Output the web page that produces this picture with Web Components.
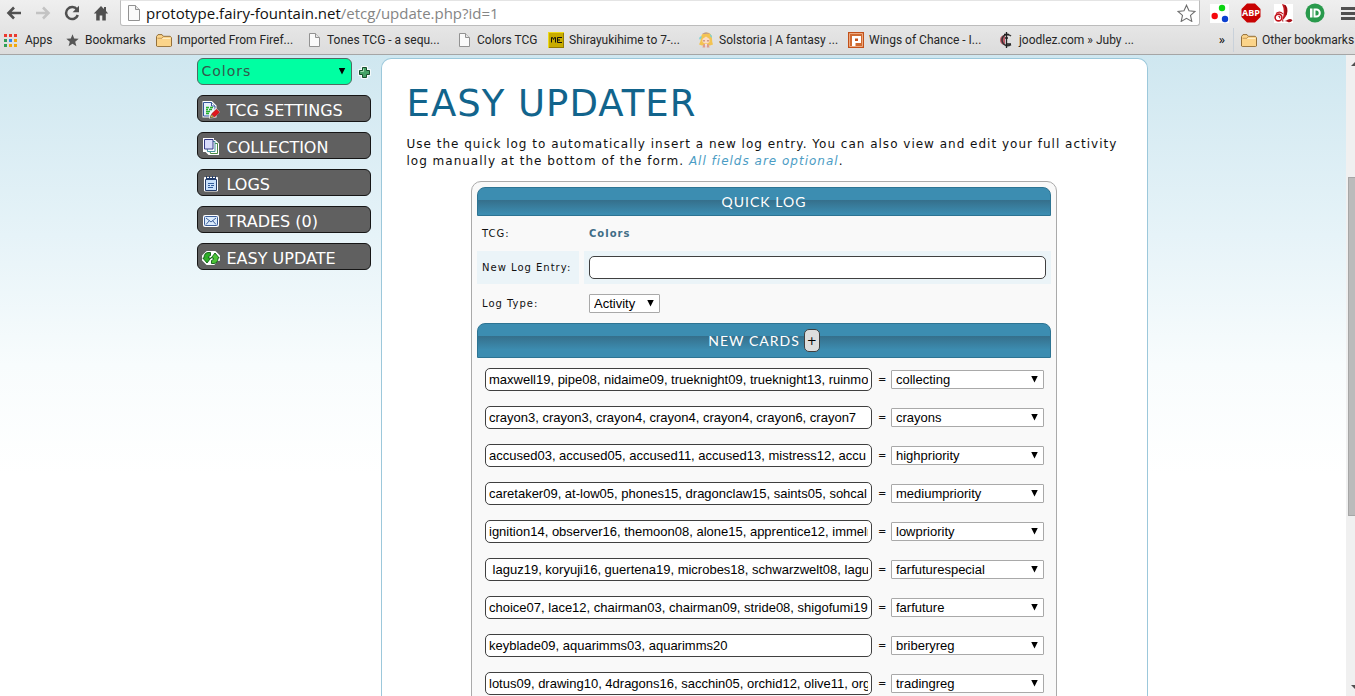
<!DOCTYPE html>
<html lang="en">
<head>
<meta charset="utf-8">
<title>Easy Updater</title>
<style>
  html, body { margin: 0; height: 100%; }
  body { overflow: hidden; font-family: "DejaVu Sans", Verdana, sans-serif; }
</style>
</head>
<body>
<app-window></app-window>

<script>
const define = (name, html, setup) => {
  const template = document.createElement('template');
  template.innerHTML = '<style>*{box-sizing:border-box}</style>' + html;
  customElements.define(name, class extends HTMLElement {
    constructor() {
      super();
      this.attachShadow({ mode: 'open' }).append(template.content.cloneNode(true));
    }
    connectedCallback() { if (setup) setup(this, this.shadowRoot); }
  });
};

const icons = {
  back: [16, 16, '<path d="M8 2.5 2.5 8 8 13.5M3 8h12" fill="none" stroke="#505050" stroke-width="2.6"/>'],
  forward: [16, 16, '<path d="M8 2.5 13.5 8 8 13.5M13 8H1" fill="none" stroke="#c3c3c3" stroke-width="2.6"/>'],
  reload: [16, 16, '<path d="M13 4.6A6 6 0 1 0 13.8 10" fill="none" stroke="#505050" stroke-width="2.5"/><path d="M15 .8v6.4H8.600z" fill="#505050"/>'],
  home: [16, 16, '<path d="M8 1 .8 8.500h2.400V15.500h3.500v-5h2.600v5h3.500v-7h2.400L13 6V2h-2v2.100z" fill="#505050"/>'],
  page: [12, 16, '<path d="M.5.5h7l4 4v11H.5z" fill="#fafafa" stroke="#929292"/><path d="M7.500.5v4h4" fill="#e4e4e4" stroke="#929292"/>'],
  smallPage: [11, 14, '<path d="M.5.5h6l4 4v9H.5z" fill="#fafafa" stroke="#929292"/><path d="M6.500.5v4h4" fill="#e4e4e4" stroke="#929292"/>'],
  star: [19, 18, '<path d="m9.500 1.200 2.500 5.600 6 .6-4.500 4 1.300 6-5.300-3.100-5.300 3.100 1.300-6-4.500-4 6-.6z" fill="#fff" stroke="#6e6e6e" stroke-width="1.100"/>'],
  rgb: [19, 19, '<path d="M0 0h19v19H0z" fill="#fff"/><circle cx="12" cy="4" r="3.200" fill="#0bd411"/><circle cx="4.700" cy="12" r="3.200" fill="#f5080d"/><circle cx="15" cy="15" r="3.200" fill="#0b3fd0"/>'],
  abpShape: [20, 20, '<path d="M6 .5h8L19.500 6v8L14 19.500H6L.5 14V6z" fill="#c80202"/>'],
  red: [19, 19, '<path d="M0 0h19v19H0z" fill="#fff"/><path d="M8 0q6 1 5.500 7T8 16.500Q11.500 7 8 0z" fill="#c4151d"/><path d="M8 16q3 2 6-.5 2.500-1.500 4.500.8-2 3-5 1.500-2.500-1.400-5.500-.3z" fill="#a90e16"/><path d="M11 1q2 4 1 10" stroke="#7b0b10" fill="none"/><circle cx="4.500" cy="13.500" r="3.400" fill="none" stroke="#c4151d" stroke-width="1.600"/><path d="M4.300 12.300q2 0 1.300 2M2 9.500q4-3 7 .5" fill="none" stroke="#c4151d" stroke-width="1.100"/>'],
  green: [20, 20, '<circle cx="10" cy="10" r="9.500" fill="#299a4c"/><path d="M5 5.500h2.500v9H5zM8.500 5.500h2.800a4.500 4.500 0 0 1 0 9H8.500z" fill="#fff"/><path d="M10.500 7.500h.7a2.500 2.500 0 0 1 0 5h-.7z" fill="#299a4c"/>'],
  menu: [14, 13, '<path d="M0 1.500h14M0 6.500h14M0 11.500h14" stroke="#505050" stroke-width="3"/>'],
  apps: [13, 13, '<path d="M0 0h3v3H0zM5 0h3v3H5zM10 0h3v3h-3z" fill="#ea3a30"/><path d="M0 5h3v3H0z" fill="#2f9e56"/><path d="M5 5h3v3H5z" fill="#2f86ee"/><path d="M10 5h3v3h-3z" fill="#f1a80d"/><path d="M0 10h3v3H0z" fill="#2f9e56"/><path d="M5 10h3v3H5zM10 10h3v3h-3z" fill="#f1a80d"/>'],
  solidStar: [13, 13, '<path d="m6.500.3 1.700 4.200 4.500.3-3.500 2.900 1.200 4.600-3.900-2.600-3.900 2.600 1.200-4.600L.3 4.800l4.500-.3z" fill="#555"/>'],
  folder: [16, 13, '<path d="M.5 12V2.500L2 .6h4l1.300 1.700h6.900l1.300 1.300V12l-.8.600H1.200z" fill="#fbd48a" stroke="#94703a"/><path d="M1.500 4.500h13" stroke="#ffedc2"/><path d="M7 2.800l-1 1.500H1.500" fill="none" stroke="#c9974f"/>'],
  mc: [16, 16, '<path d="M0 0h16v16H0z" fill="#c8ac00"/><path d="M0 0h16v1H1v15H0z" fill="#eeda1a"/><path d="M15 1v14H1v1h15V1z" fill="#937b00"/><path d="M3.500 10.500v-5h1l1 2 1-2h1v5M14 5.500H9.500v5H14M9.500 8H12" fill="none" stroke="#111"/>'],
  girl: [14, 16, '<path d="M2 5q1-5 6-4.500 5 .5 5 6 0 4 1 6l-3 1H3l-3-1q2-3 2-7.500z" fill="#f3c352"/><path d="M3 2Q7-1 11 2L8 1.500z" fill="#a98aa0"/><path d="M2 4 0 6l1 2 2-3zM11 2l2 2v2l-2-2z" fill="#7ed2d6"/><path d="M3.500 7 7 4.500l3.500 2.500v3Q7 13 3.500 10z" fill="#fbdcc6"/><path d="M5 8v1.500M9 8v1.500" stroke="#a1584b"/><path d="M4.500 12h5l1 3.500h-7z" fill="#de9d8b"/><path d="M6 12h2l-.5 4h-1z" fill="#eee9f1"/>'],
  wings: [16, 16, '<path d="M0 0h16v16H0z" fill="#c25019"/><path d="M1.500 1.500h13v13h-13z" fill="#cf6b32" stroke="#eeaa80"/><path d="M4 4h9v7H7.500v3H4z" fill="#fff"/><path d="M7 6.500h3V9H7z" fill="#c25019"/>'],
  joodlez: [14, 16, '<path d="M6 3Q1 3.500 1 8t5 5z" fill="#bd5966"/><path d="M12 4Q8 1 4.500 4q-3 4 0 8 3.500 3 7.500.5" fill="none" stroke="#343434" stroke-width="1.500"/><path d="M7.500 0v16M5 2.500h5M6 6h3M8 12h4" stroke="#222" stroke-width="1.300"/>'],
  plus: [13, 13, '<path d="M4.500 1.500h4v3h3v4h-3v3h-4v-3h-3v-4h3z" fill="none" stroke="#fff" stroke-width="2.500"/><path d="M4.500 1.500h4v3h3v4h-3v3h-4v-3h-3v-4h3z" fill="#45a266" stroke="#174d2b"/><path d="M5.500 2.500v3h-3" fill="none" stroke="#a4dcb4"/>'],
  settings: [18, 18, '<path d="M1.500 1h8l4 4v10.500h-12z" fill="#fff" stroke="#fff" stroke-width="2"/><path d="M1.500 1.500h8l3.500 3.500v10H1.500z" fill="#e7effc" stroke="#35579c"/><path d="M9.500 1.500V5H13" fill="#fff" stroke="#35579c"/><path d="M4 6.500h3M8 6.500h3M4 8.500h2M7 8.500h3M4 10.500h4M4 12.500h3" stroke="#22b02b" stroke-width="1.300"/><path d="m7 17.500.5-4.500L14 7l4 4-6 6z" fill="#fff"/><path d="m9.500 13 5-4.800 3 3-5 4.800z" fill="#e2161c" stroke="#9b0c0e" stroke-width=".7"/><path d="m8.200 16.900 1-3.200 2.500 2.400z" fill="#f6cf3d" stroke="#222" stroke-width=".6"/>'],
  collection: [16, 17, '<path d="M1 1h9v2h2l3 3v10H6l-3-3H1z" fill="#fff" stroke="#fff" stroke-width="2"/><path d="M5.500 5.500h9v10h-7z" fill="#fff" stroke="#4d8c45"/><path d="M3.500 3.500h8.500v10H4.500z" fill="#fff" stroke="#45929c"/><path d="M1.500 1.500H10V11H1.500z" fill="#d9dcfb" stroke="#353a87"/>'],
  logs: [14, 16, '<path d="M.5 1.500h13V15H.5z" fill="#fff" stroke="#fff"/><path d="M1.500 3.500h11v11h-11z" fill="#c9e0fb" stroke="#243d6b"/><path d="M2 3h10" stroke="#243d6b" stroke-width="2"/><path d="M2.500 0v3M5.500 0v3M8.500 0v3M11.500 0v3" stroke="#243d6b"/><path d="M4 7.500h6M4 9.500h2M7 9.500h3M4 11.500h5" stroke="#315c9b"/>'],
  trades: [16, 12, '<rect width="16" height="12" rx="2" fill="#fff"/><rect x="1.500" y="1.500" width="13" height="9" rx="1" fill="#dcecfc" stroke="#3c5f9b"/><path d="m3 3 5 4 5-4M3 9.500l3.500-4M13 9.500l-3.500-4" fill="none" stroke="#3c5f9b"/>'],
  update: [18, 14, '<path d="M5 1h8l4 4v4h-2l-3 4H5L1 9V5z" fill="#fff" stroke="#fff" stroke-width="2" stroke-linejoin="round"/><path d="M8.500 1.500H6Q2 2 2 7H.8L5 12l3.800-5H6.500Q6 5 8.500 4.500z" fill="#2fae27" stroke="#0c5d13" stroke-width=".9"/><path d="M9.500 12.500H12Q16 12 16 7h1.200L13 2 9.200 7h2.300Q12 9 9.500 9.500z" fill="#4cc436" stroke="#0c5d13" stroke-width=".9"/>'],
};

define('ui-icon', `
  <style>:host{display:inline-flex;flex:none} svg{display:block}</style>
  <span></span>`, (host, root) => {
  const [w, h, body] = icons[host.getAttribute('name')];
  root.querySelector('span').innerHTML = `<svg width="${w}" height="${h}" viewBox="0 0 ${w} ${h}" aria-hidden="true">${body}</svg>`;
});

define('bookmark-link', `
  <style>
    :host{display:block;flex:none;width:150px}
    :host([size=short]){width:92px}
    :host([size=apps]){width:60px}
    :host([size=other]){width:122px}
    a{display:flex;align-items:center;gap:5px;height:24px;color:#262626;text-decoration:none;white-space:nowrap;
      font:12px/16px Roboto,"Segoe UI",sans-serif}
    span{display:flex;justify-content:center;min-width:16px}
    :host([size=apps]) span{min-width:13px}
    :host([size=apps]) a{gap:8px}
  </style>
  <a href="#"><span></span><slot></slot></a>`, (host, root) => {
  const icon = document.createElement('ui-icon');
  icon.setAttribute('name', host.getAttribute('icon'));
  root.querySelector('span').replaceChildren(icon);
});

define('browser-bar', `
  <style>
    :host{display:block;flex:none;overflow:hidden;border-bottom:1px solid #a5a5a5;background:linear-gradient(#efefef,#dcdcdc)}
    .tools{display:flex;align-items:center;height:26px}
    button{display:flex;justify-content:center;padding:0;border:0;background:none}
    .nav{display:flex;gap:13px;padding:0 11px 0 6px}
    .address{display:flex;flex:1;align-items:center;min-width:0;height:26px;padding:0 3px 0 7px;gap:6px;
      border:1px solid #bcbcbc;border-top-color:#e4e4e4;border-radius:0 0 3px 3px;background:#fff}
    .url{flex:1;font:15px/20px "Open Sans","Segoe UI",sans-serif;color:#111;white-space:nowrap}
    .url span{color:#858585}
    .ext{display:flex;align-items:center;gap:12px;padding-left:9px}
    .ext button{width:20px}
    .ext .abp{display:grid;place-items:center;color:#fff;font:bold 9px/10px "Open Sans",sans-serif}
    .abp > *{grid-area:1/1}
    .ext .menu{width:14px;margin-left:4px}
    .marks{display:flex;align-items:center;height:28px;padding-left:4px}
    .more{flex:1;display:flex;justify-content:flex-end;padding-right:8px;font:12px/16px "Open Sans",sans-serif}
    .other{border-left:1px solid #c9d1da;padding-left:7px}
  </style>
  <div class="tools">
    <div class="nav">
      <button aria-label="Back"><ui-icon name="back"></ui-icon></button>
      <button aria-label="Forward"><ui-icon name="forward"></ui-icon></button>
      <button aria-label="Reload"><ui-icon name="reload"></ui-icon></button>
      <button aria-label="Home"><ui-icon name="home"></ui-icon></button>
    </div>
    <div class="address">
      <ui-icon name="page"></ui-icon>
      <div class="url">prototype.fairy-fountain.net<span>/etcg/update.php?id=1</span></div>
      <button aria-label="Bookmark this page"><ui-icon name="star"></ui-icon></button>
    </div>
    <div class="ext">
      <button aria-label="Colour extension"><ui-icon name="rgb"></ui-icon></button>
      <button class="abp"><ui-icon name="abpShape"></ui-icon><span>ABP</span></button>
      <button aria-label="Reader extension"><ui-icon name="red"></ui-icon></button>
      <button aria-label="Green extension"><ui-icon name="green"></ui-icon></button>
      <button class="menu" aria-label="Menu"><ui-icon name="menu"></ui-icon></button>
    </div>
  </div>
  <div class="marks">
    <bookmark-link icon="apps" size="apps">Apps</bookmark-link>
    <bookmark-link icon="solidStar" size="short">Bookmarks</bookmark-link>
    <bookmark-link icon="folder">Imported From Firef...</bookmark-link>
    <bookmark-link icon="smallPage">Tones TCG - a sequ...</bookmark-link>
    <bookmark-link icon="smallPage" size="short">Colors TCG</bookmark-link>
    <bookmark-link icon="mc">Shirayukihime to 7-...</bookmark-link>
    <bookmark-link icon="girl">Solstoria | A fantasy ...</bookmark-link>
    <bookmark-link icon="wings">Wings of Chance - I...</bookmark-link>
    <bookmark-link icon="joodlez">joodlez.com » Juby ...</bookmark-link>
    <span class="more">»</span>
    <bookmark-link class="other" icon="folder" size="other">Other bookmarks</bookmark-link>
  </div>`);

define('scroll-bar', `
  <style>
    :host{display:flex;flex:none;width:9px;overflow:hidden;background:#f0f0f0}
    .track{display:flex;flex:none;flex-direction:column;align-items:center;width:17px;padding:7px 0}
    .up,.down{flex:none;border:4px solid transparent;border-top-width:0;border-bottom:4px solid #505050}
    .down{border-width:4px 4px 0;border-top-color:#505050}
    .before{flex:111}
    .thumb{flex:338;width:13px;border:1px solid #a6a6a6;background:#bbb}
    .after{flex:170}
  </style>
  <div class="track"><i class="up"></i><i class="before"></i><i class="thumb"></i><i class="after"></i><i class="down"></i></div>`);

define('pick-list', `
  <style>
    :host{display:block;position:relative}
    :host::after{content:"";position:absolute;right:6px;top:50%;width:7px;height:7px;margin-top:-4px;background:#000;
      clip-path:polygon(0 0,100% 0,50% 100%);pointer-events:none}
    select{display:block;appearance:none;width:100%;height:19px;padding:0 18px 0 4px;border:1px solid #a9a9a9;border-radius:1px;
      background:#fff;color:#000;font:13px/17px "Liberation Sans",Arial,sans-serif}
    :host([kind=site]) select{height:27px;border-color:#4f6b62;border-radius:6px;background:#00ffa2;color:#33584c;
      font:14px/25px "DejaVu Sans",Verdana,sans-serif;letter-spacing:1px}
  </style>
  <select><option></option></select>`, (host, root) => {
  root.querySelector('option').textContent = host.getAttribute('value');
  root.querySelector('select').setAttribute('aria-label', host.getAttribute('label'));
});

define('nav-button', `
  <style>
    :host{display:block}
    a{display:flex;align-items:center;gap:7px;height:27px;padding:2px 4px 0;border:1px solid #161616;border-radius:6px;
      background:#606060;color:#fff;font-size:16px;line-height:24px;text-decoration:none;white-space:nowrap}
    span{display:flex;justify-content:center;width:18px}
    b{padding-top:2px;font-weight:400}
  </style>
  <a href="#"><span></span><b><slot></slot></b></a>`, (host, root) => {
  const icon = document.createElement('ui-icon');
  icon.setAttribute('name', host.getAttribute('icon'));
  root.querySelector('span').replaceChildren(icon);
});

define('side-menu', `
  <style>
    :host{display:block;flex:none;width:174px}
    nav{display:grid;gap:10px}
    .site{display:flex;align-items:center;gap:6px}
    pick-list{flex:1}
    button{display:flex;padding:2px 0 0;border:0;background:none}
  </style>
  <nav>
    <div class="site"><pick-list kind="site" label="TCG" value="Colors"></pick-list>
      <button aria-label="Add TCG"><ui-icon name="plus"></ui-icon></button></div>
    <nav-button icon="settings">TCG SETTINGS</nav-button>
    <nav-button icon="collection">COLLECTION</nav-button>
    <nav-button icon="logs">LOGS</nav-button>
    <nav-button icon="trades">TRADES (0)</nav-button>
    <nav-button icon="update">EASY UPDATE</nav-button>
  </nav>`);

define('section-bar', `
  <style>
    :host{display:block}
    h2{display:flex;align-items:center;justify-content:center;gap:4px;min-height:29px;margin:0;padding:5px 0;border:1px solid #2d7493;
      border-radius:8px 8px 0 0;background:linear-gradient(#3c8db1 12px,#356f8b 12px,#3c8db1 26px);color:#fff;
      font:14px/17px "Century Gothic",Lato,sans-serif;letter-spacing:1px}
  </style>
  <h2><slot></slot></h2>`);

define('card-row', `
  <style>
    :host{display:flex;align-items:center;gap:6px;font-size:10px;line-height:12px}
    input{flex:1;min-width:0;height:23px;padding:0 3px;border:1px solid #404040;border-radius:5px;background:#fff;color:#000;
      font:13px/17px "Liberation Sans",Arial,sans-serif}
    span{width:7px}
    pick-list{flex:none;width:153px}
  </style>
  <input type="text" aria-label="Cards"><span>=</span>`, (host, root) => {
  root.querySelector('input').value = host.getAttribute('cards');
  const list = document.createElement('pick-list');
  list.setAttribute('label', 'Category');
  list.setAttribute('value', host.getAttribute('category'));
  root.append(list);
});

define('quick-log', `
  <style>
    :host{display:block;max-width:586px;margin:0 auto;padding:5px;border:1px solid #aaa;border-radius:10px;background:#f9f9f9;
      font-size:10px;line-height:13px;letter-spacing:1px;color:#111}
    .fields{display:grid;grid-template-columns:102px 1fr;column-gap:5px}
    .fields > *{display:flex;align-items:center;padding:0 5px}
    .tcg{height:35px}
    .entry{height:33px;background:#ebf4f8}
    .type{height:39px}
    b{color:#3f6d86}
    input{width:100%;height:23px;padding:0 3px;border:1px solid #404040;border-radius:5px;background:#fff;
      font:13px/17px "Liberation Sans",Arial,sans-serif}
    label{white-space:nowrap}
    .type pick-list{width:71px}
    button{width:16px;height:23px;padding:0;border:1px solid #404040;border-radius:5px;background:#ddd;color:#000;
      font:12px/20px "DejaVu Sans",sans-serif}
    .cards{display:grid;gap:15px;padding:10px 7px 10px 8px;letter-spacing:0}
  </style>
  <section-bar>QUICK LOG</section-bar>
  <div class="fields">
    <span class="tcg">TCG:</span><span class="tcg"><b>Colors</b></span>
    <label class="entry" for="entry">New Log Entry:</label><span class="entry"><input id="entry" type="text"></span>
    <span class="type">Log Type:</span><span class="type"><pick-list label="Log Type" value="Activity"></pick-list></span>
  </div>
  <section-bar>NEW CARDS <button aria-label="Add cards">+</button></section-bar>
  <div class="cards">
    <card-row cards="maxwell19, pipe08, nidaime09, trueknight09, trueknight13, ruinmo" category="collecting"></card-row>
    <card-row cards="crayon3, crayon3, crayon4, crayon4, crayon4, crayon6, crayon7" category="crayons"></card-row>
    <card-row cards="accused03, accused05, accused11, accused13, mistress12, accu" category="highpriority"></card-row>
    <card-row cards="caretaker09, at-low05, phones15, dragonclaw15, saints05, sohcal" category="mediumpriority"></card-row>
    <card-row cards="ignition14, observer16, themoon08, alone15, apprentice12, immelm" category="lowpriority"></card-row>
    <card-row cards=" laguz19, koryuji16, guertena19, microbes18, schwarzwelt08, lagu" category="farfuturespecial"></card-row>
    <card-row cards="choice07, lace12, chairman03, chairman09, stride08, shigofumi19" category="farfuture"></card-row>
    <card-row cards="keyblade09, aquarimms03, aquarimms20" category="briberyreg"></card-row>
    <card-row cards="lotus09, drawing10, 4dragons16, sacchin05, orchid12, olive11, org" category="tradingreg"></card-row>
  </div>`);

define('update-page', `
  <style>
    :host{display:flex;justify-content:center;flex:1;gap:10px;min-width:0;padding:3px 11px 0 9px;overflow:hidden;
      background:linear-gradient(#cfe7f0,#e6f3f8 180px,#f8fcfd 310px,#fff 420px)}
    main{flex:1;max-width:767px;min-width:0;padding:21px 25px 0;border:1px solid #9cc8db;border-bottom:0;border-radius:10px 10px 0 0;background:#fff}
    h1{margin:0;color:#12648c;font-size:37px;font-weight:400;line-height:48px;letter-spacing:1px}
    p{margin:8px 0 11px;color:#111;font-size:12px;line-height:17px;letter-spacing:1px}
    a{color:#4b9cc4;font-style:italic;text-decoration:none}
  </style>
  <side-menu></side-menu>
  <main>
    <h1>EASY UPDATER</h1>
    <p>Use the quick log to automatically insert a new log entry. You can also view and edit your full activity log manually at the bottom of the form. <a href="#">All fields are optional</a>.</p>
    <quick-log></quick-log>
  </main>`);

define('app-window', `
  <style>
    :host{display:flex;flex-direction:column;height:100vh;overflow:hidden}
    .view{display:flex;flex:1;min-height:0}
  </style>
  <browser-bar></browser-bar>
  <div class="view"><update-page></update-page><scroll-bar></scroll-bar></div>`);
</script>
</body>
</html>
